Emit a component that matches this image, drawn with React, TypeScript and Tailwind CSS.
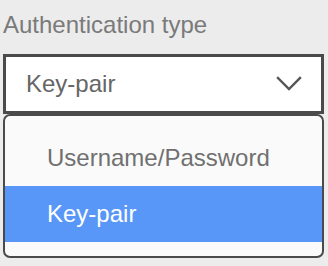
import React from 'react';

const options = ['Username/Password', 'Key-pair'];

function Chevron() {
  return (
    <svg width="26" height="16" viewBox="0 0 26 16" fill="none" className="shrink-0">
      <path d="M2 2 L13 13 L24 2" stroke="#555555" strokeWidth="2.4" strokeLinecap="square" />
    </svg>
  );
}

export default function App() {
  const selected = 'Key-pair';

  return (
    <div
      className="w-[328px] h-[266px] bg-[#ececec] pl-[3px] pr-[4px] pt-[11px] overflow-hidden"
      style={{ fontFamily: '"Liberation Sans", Arial, sans-serif' }}
    >
      {/* Label */}
      <div className="text-[24px] leading-[28px] text-[#7a7a7a]">Authentication type</div>

      {/* Select box */}
      <div className="mt-[15px] h-[60px] bg-white border-[3px] border-[#4a4a4a] flex items-center justify-between pl-[20px] pr-[19px]">
        <span className="text-[24px] leading-[28px] text-[#666666]">{selected}</span>
        <Chevron />
      </div>

      {/* Dropdown list */}
      <div className="h-[144px] bg-[#fafafa] border-2 border-[#4a4a4a] rounded-[7px] py-[14px] overflow-hidden">
        {options.map((opt) => (
          <div
            key={opt}
            className={
              opt === selected
                ? 'h-[56px] flex items-center pl-[42px] bg-[#5897f8] text-white text-[24px] leading-[28px]'
                : 'h-[56px] flex items-center pl-[42px] text-[#707070] text-[24px] leading-[28px]'
            }
          >
            {opt}
          </div>
        ))}
      </div>
    </div>
  );
}
